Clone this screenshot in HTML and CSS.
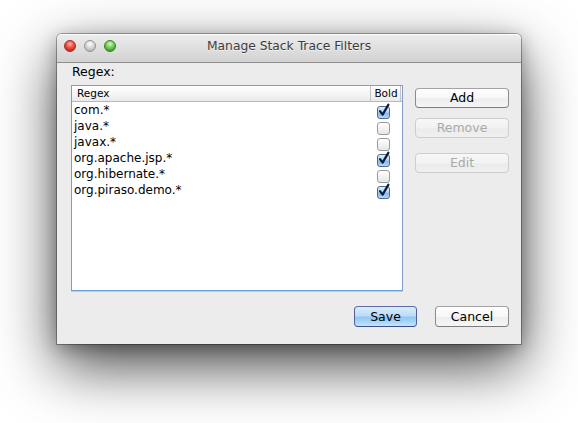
FILE: index.html
```html
<!DOCTYPE html>
<html>
<head>
<meta charset="utf-8">
<title>Manage Stack Trace Filters</title>
<link rel="stylesheet" href="styles.css">
</head>
<body>
<div class="stage">
  <div class="window">
    <div class="titlebar">
      <div class="lights">
        <span class="light red"></span>
        <span class="light gray"></span>
        <span class="light green"></span>
      </div>
      <div class="title">Manage Stack Trace Filters</div>
      <div></div>
    </div>
    <div class="content">
      <div class="main">
        <div class="left">
          <div class="label">Regex:</div>
          <div class="table">
            <div class="thead">
              <div class="th th-regex">Regex</div>
              <div class="th th-bold">Bold</div>
              <div class="th th-end"></div>
            </div>
            <div class="row"><div class="cell-regex">com.*</div><div class="cell-bold"><span class="cb checked"><svg viewBox="0 0 13 16" width="13" height="16"><path d="M3 9.2 L5.6 12.6 L11.4 2.6" fill="none" stroke="#0f1c38" stroke-width="2.2" stroke-linecap="round" stroke-linejoin="round"/></svg></span></div></div>
            <div class="row"><div class="cell-regex">java.*</div><div class="cell-bold"><span class="cb"></span></div></div>
            <div class="row"><div class="cell-regex">javax.*</div><div class="cell-bold"><span class="cb"></span></div></div>
            <div class="row"><div class="cell-regex">org.apache.jsp.*</div><div class="cell-bold"><span class="cb checked"><svg viewBox="0 0 13 16" width="13" height="16"><path d="M3 9.2 L5.6 12.6 L11.4 2.6" fill="none" stroke="#0f1c38" stroke-width="2.2" stroke-linecap="round" stroke-linejoin="round"/></svg></span></div></div>
            <div class="row"><div class="cell-regex">org.hibernate.*</div><div class="cell-bold"><span class="cb"></span></div></div>
            <div class="row"><div class="cell-regex">org.piraso.demo.*</div><div class="cell-bold"><span class="cb checked"><svg viewBox="0 0 13 16" width="13" height="16"><path d="M3 9.2 L5.6 12.6 L11.4 2.6" fill="none" stroke="#0f1c38" stroke-width="2.2" stroke-linecap="round" stroke-linejoin="round"/></svg></span></div></div>
          </div>
        </div>
        <div class="side">
          <button class="btn btn-add">Add</button>
          <button class="btn btn-remove" disabled>Remove</button>
          <button class="btn btn-edit" disabled>Edit</button>
        </div>
      </div>
      <div class="footer">
        <button class="btn btn-default">Save</button>
        <button class="btn btn-cancel">Cancel</button>
      </div>
    </div>
  </div>
</div>
</body>
</html>
```
FILE: styles.css
```css
html, body {
  margin: 0;
  padding: 0;
  background: #ffffff;
}
body {
  width: 578px;
  height: 423px;
  overflow: hidden;
  font-family: "DejaVu Sans", "Liberation Sans", sans-serif;
  color: #000;
}
.stage {
  padding: 34px 0 0 57px;
}
.window {
  width: 464px;
  height: 310px;
  box-sizing: border-box;
  background: #ececec;
  border-radius: 5px 5px 0 0;
  box-shadow: 0 0 0 1px rgba(0,0,0,0.3), 0 22px 60px rgba(0,0,0,0.72), 0 4px 18px rgba(0,0,0,0.3);
  display: flex;
  flex-direction: column;
}
.titlebar {
  height: 29px;
  box-sizing: border-box;
  border-bottom: 1px solid #8f8f8f;
  border-radius: 5px 5px 0 0;
  background: linear-gradient(#ededed 0%, #e2e2e2 40%, #d2d2d2 100%);
  box-shadow: inset 0 1px 0 rgba(255,255,255,0.8);
  display: grid;
  grid-template-columns: 1fr auto 1fr;
  align-items: center;
  padding-bottom: 4px;
}
.lights {
  display: flex;
  gap: 8px;
  padding-left: 7px;
}
.light {
  width: 12px;
  height: 12px;
  border-radius: 50%;
  box-sizing: border-box;
}
.light.red {
  background: radial-gradient(circle at 50% 30%, #ffb2a8 0%, #f0564d 40%, #c8241c 80%, #e8605a 100%);
  border: 1px solid #a52a22;
}
.light.gray {
  background: radial-gradient(circle at 50% 30%, #ffffff 0%, #dcdcdc 40%, #b5b5b5 80%, #d6d6d6 100%);
  border: 1px solid #949494;
}
.light.green {
  background: radial-gradient(circle at 50% 30%, #d8f7c6 0%, #7ed25f 40%, #3f9c25 80%, #7acb5c 100%);
  border: 1px solid #3a7f2a;
}
.title {
  font-size: 12.3px;
  color: #3c3c3c;
  text-shadow: 0 1px 0 rgba(255,255,255,0.6);
  white-space: nowrap;
}
.content {
  flex: 1;
  display: flex;
  flex-direction: column;
  padding: 0 12px 17px 14px;
}
.main {
  display: flex;
  gap: 12px;
}
.left {
  width: 332px;
}
.label {
  height: 22px;
  box-sizing: border-box;
  padding: 1px 0 0 1px;
  font-size: 12.5px;
  line-height: 16px;
}
.table {
  height: 206px;
  box-sizing: border-box;
  background: #fff;
  border: 1px solid #7f9fc6;
  border-left-color: #8a9cb2;
  border-bottom-color: #6b9fd6;
  box-shadow: 0 1px 0 #b6d0ec;
}
.thead {
  display: flex;
  height: 16px;
  box-sizing: border-box;
  border-bottom: 1px solid #b9b9b9;
  background: linear-gradient(#ffffff, #f4f4f4 60%, #e9e9e9);
  font-size: 10.5px;
  line-height: 15px;
}
.th-regex {
  width: 299px;
  padding-left: 5px;
  box-sizing: border-box;
  border-right: 1px solid #c4c4c4;
}
.th-bold {
  width: 30px;
  box-sizing: border-box;
  text-align: center;
  border-right: 1px solid #c4c4c4;
  padding-left: 1px;
}
.th-end { flex: 1; }
.row {
  display: flex;
  height: 16px;
  font-size: 12px;
  line-height: 17px;
}
.cell-regex {
  width: 299px;
  padding-left: 2px;
  box-sizing: border-box;
  white-space: nowrap;
}
.cell-bold {
  width: 30px;
  box-sizing: border-box;
  padding: 4px 0 0 6px;
}
.cb {
  display: block;
  position: relative;
  width: 13px;
  height: 13px;
  box-sizing: border-box;
  border: 1px solid #9a9a9a;
  border-radius: 3px;
  background: linear-gradient(#ffffff, #f3f3f3 50%, #e6e6e6);
}
.cb.checked {
  border-color: #53688f;
  background: linear-gradient(#e2effc, #b3d5f6 45%, #86bdee 60%, #b5d9f8);
}
.cb svg {
  position: absolute;
  left: -1px;
  top: -5px;
}
.side {
  width: 94px;
  padding-top: 25px;
  display: flex;
  flex-direction: column;
}
.btn {
  font-family: "DejaVu Sans", "Liberation Sans", sans-serif;
  font-size: 12.5px;
  color: #000;
  height: 20px;
  padding: 0;
  margin: 0;
  box-sizing: border-box;
  border: 1px solid #8c8c8c;
  border-top-color: #a3a3a3;
  border-bottom-color: #7c7c7c;
  border-radius: 4px;
  background: linear-gradient(#ffffff, #f7f7f7 50%, #ededed 55%, #f6f6f6);
  line-height: 18px;
  text-align: center;
}
.btn:disabled {
  color: #a9a9a9;
  border-color: #cdcdcd;
  background: linear-gradient(#f7f7f7, #f2f2f2 50%, #ebebeb 55%, #f0f0f0);
}
.btn-remove { margin-top: 10px; }
.btn-edit { margin-top: 15px; }
.footer {
  margin-top: 15px;
  display: flex;
  justify-content: flex-end;
  gap: 18px;
}
.footer .btn {
  height: 21px;
  line-height: 19px;
}
.btn-default {
  width: 63px;
  border-color: #4f609a;
  border-top-color: #5d6ea6;
  border-bottom-color: #3e4f86;
  background: linear-gradient(#dcedfc, #bcdcf8 45%, #93c7f3 55%, #a9d6f9 80%, #c5e6fc);
}
.btn-cancel {
  width: 74px;
}
```
